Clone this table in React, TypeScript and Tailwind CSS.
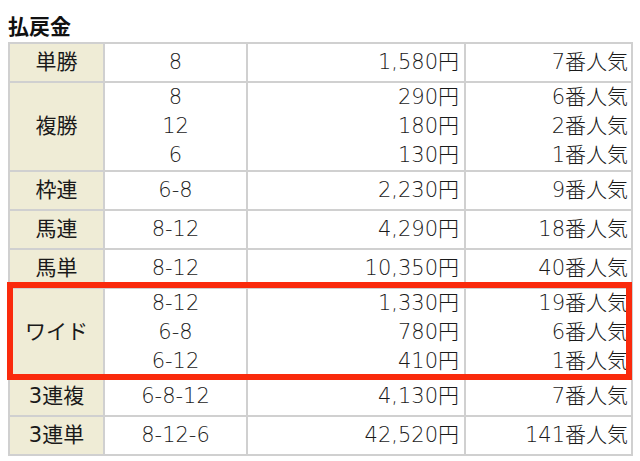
const FONT = { fontFamily: '"DejaVu Sans", "Noto Sans CJK JP", sans-serif' };
const TITLE_FONT = { fontFamily: '"Noto Sans CJK JP", sans-serif' };

type Row = {
  label: string;
  nums: string[];
  pay: string[];
  pop: string[];
};

const rows: Row[] = [
  { label: "単勝", nums: ["8"], pay: ["1,580円"], pop: ["7番人気"] },
  { label: "複勝", nums: ["8", "12", "6"], pay: ["290円", "180円", "130円"], pop: ["6番人気", "2番人気", "1番人気"] },
  { label: "枠連", nums: ["6-8"], pay: ["2,230円"], pop: ["9番人気"] },
  { label: "馬連", nums: ["8-12"], pay: ["4,290円"], pop: ["18番人気"] },
  { label: "馬単", nums: ["8-12"], pay: ["10,350円"], pop: ["40番人気"] },
  { label: "ワイド", nums: ["8-12", "6-8", "6-12"], pay: ["1,330円", "780円", "410円"], pop: ["19番人気", "6番人気", "1番人気"] },
  { label: "3連複", nums: ["6-8-12"], pay: ["4,130円"], pop: ["7番人気"] },
  { label: "3連単", nums: ["8-12-6"], pay: ["42,520円"], pop: ["141番人気"] },
];

function Lines({ items }: { items: string[] }) {
  return (
    <>
      {items.map((s, i) => (
        <div key={i}>{s}</div>
      ))}
    </>
  );
}

export default function App() {
  return (
    <div className="bg-white w-[640px] h-[461px] pl-[8px] text-[#1a1a1a]" style={FONT}>
      <div className="pt-[10px] h-[40px] leading-[30px] text-[21px] font-bold text-[#111]" style={TITLE_FONT}>
        払戻金
      </div>
      <div className="relative mt-[2px]">
        <table className="border-collapse text-[21px] leading-[29px] font-light">
          <tbody>
            {rows.map((r) => {
              const single = r.nums.length === 1;
              const pad = single ? "py-[4px]" : "py-0";
              return (
                <tr key={r.label}>
                  <td className={`border-2 border-[#d0d0d0] bg-[#efecd6] w-[95px] text-center font-normal ${pad}`}>
                    {r.label}
                  </td>
                  <td className={`border-2 border-[#d0d0d0] w-[143px] text-center ${pad}`}>
                    <Lines items={r.nums} />
                  </td>
                  <td className={`border-2 border-[#d0d0d0] w-[218px] text-right pr-[5px] ${pad}`}>
                    <Lines items={r.pay} />
                  </td>
                  <td className={`border-2 border-[#d0d0d0] w-[167px] text-right pr-[3px] ${pad}`}>
                    <Lines items={r.pop} />
                  </td>
                </tr>
              );
            })}
          </tbody>
        </table>
        <div className="absolute left-[-1px] top-[240px] w-[625px] h-[98px] border-[6px] border-[#fa2a0c]" />
      </div>
    </div>
  );
}
